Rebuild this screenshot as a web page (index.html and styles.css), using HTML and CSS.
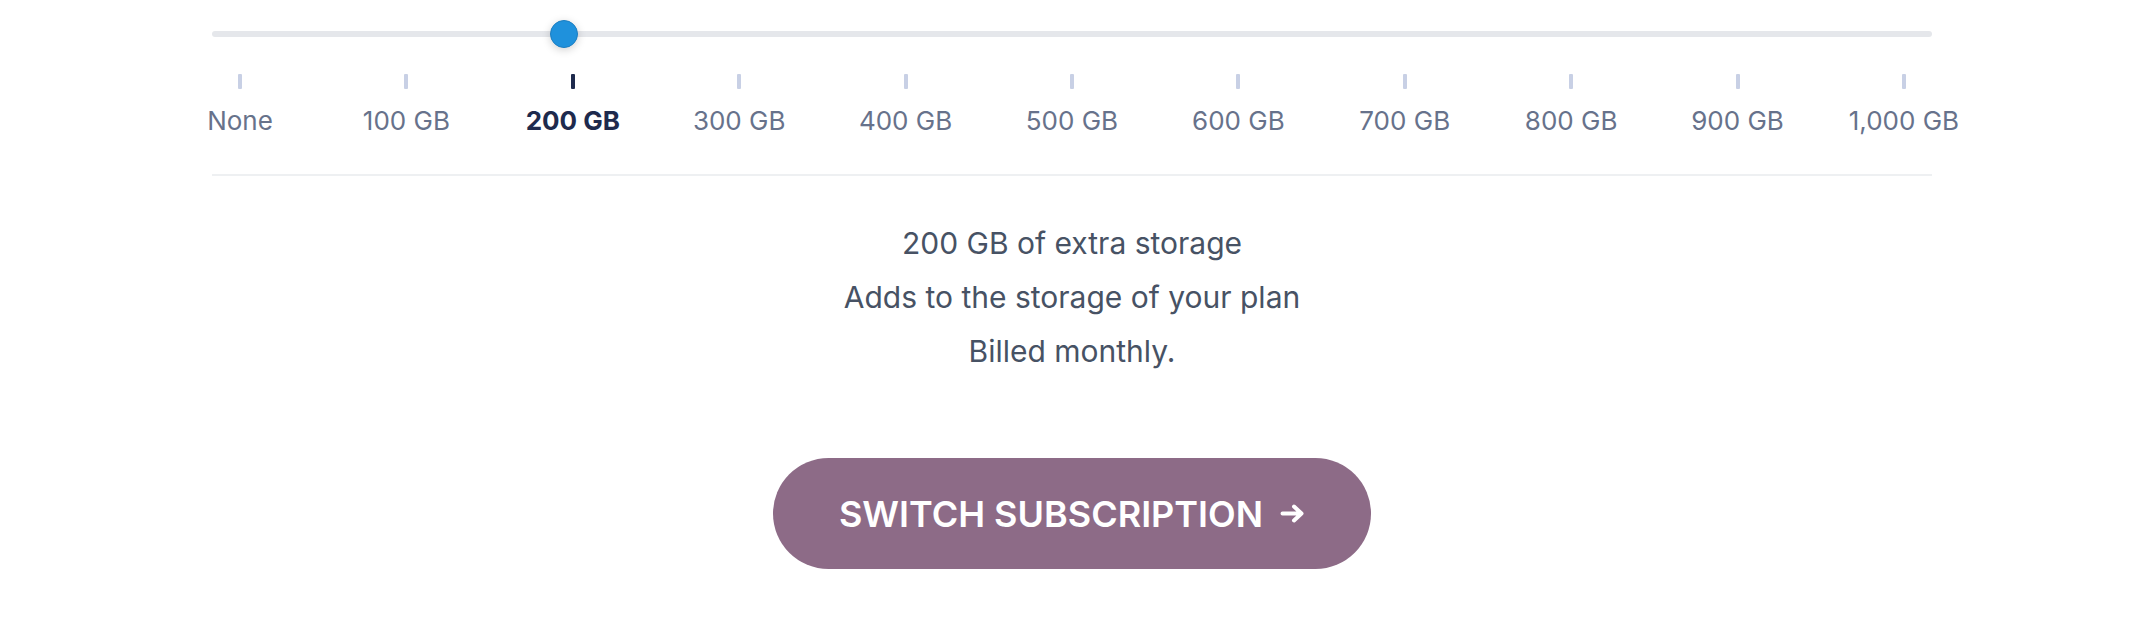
FILE: index.html
```html
<!DOCTYPE html>
<html lang="en">
<head>
    <meta charset="UTF-8">
    <meta name="viewport" content="width=device-width, initial-scale=1.0">
    <title>Extra Storage</title>
    <link rel="stylesheet" href="styles.css">
</head>
<body>
    <div id="storage">
        <input type="range" class="storage-range" min="0" max="10" step="1" value="2">

        <div class="steps">
            <div class="step"><span class="tick"></span><span class="label">None</span></div>
            <div class="step"><span class="tick"></span><span class="label">100 GB</span></div>
            <div class="step active"><span class="tick"></span><span class="label">200 GB</span></div>
            <div class="step"><span class="tick"></span><span class="label">300 GB</span></div>
            <div class="step"><span class="tick"></span><span class="label">400 GB</span></div>
            <div class="step"><span class="tick"></span><span class="label">500 GB</span></div>
            <div class="step"><span class="tick"></span><span class="label">600 GB</span></div>
            <div class="step"><span class="tick"></span><span class="label">700 GB</span></div>
            <div class="step"><span class="tick"></span><span class="label">800 GB</span></div>
            <div class="step"><span class="tick"></span><span class="label">900 GB</span></div>
            <div class="step"><span class="tick"></span><span class="label">1,000 GB</span></div>
        </div>

        <div class="summary">
            <p>200 GB of extra storage</p>
            <p>Adds to the storage of your plan</p>
            <p>Billed monthly.</p>
        </div>

        <div class="actions">
            <button class="switch-btn">
                Switch subscription
                <svg class="arrow" width="25" height="19" viewBox="0 0 25 19">
                    <path d="M2.5 9.5 H21.5 M14 2.5 L21.5 9.5 L14 16.5" fill="none" stroke="#fff" stroke-width="4" stroke-linecap="round" stroke-linejoin="round"/>
                </svg>
            </button>
        </div>
    </div>
</body>
</html>
```

FILE: styles.css
```css
body {
    font-family: Inter, 'Noto Sans', sans-serif;
    margin: 0;
    padding: 20px 0 0;
    background: #fff;
}

#storage {
    width: 1720px;
    margin: 0 auto;
}

/* slider */
.storage-range {
    -webkit-appearance: none;
    appearance: none;
    display: block;
    width: 100%;
    height: 28px;
    margin: 0;
    background: transparent;
}

.storage-range::-webkit-slider-runnable-track {
    height: 6px;
    background: #e5e7eb;
    border-radius: 3px;
}

.storage-range::-webkit-slider-thumb {
    -webkit-appearance: none;
    width: 28px;
    height: 28px;
    margin-top: -11px;
    border-radius: 50%;
    background: #1f91dc;
    border: 1px solid #1b7ec2;
    box-sizing: border-box;
    box-shadow: 0 2px 8px rgba(0, 0, 0, 0.18);
}

/* tick marks + labels */
.steps {
    display: flex;
    justify-content: space-between;
    padding: 26px 28px 0;
    border-bottom: 2px solid #eef0f2;
    height: 128px;
    box-sizing: border-box;
}

.step {
    width: 0;
    display: flex;
    flex-direction: column;
    align-items: center;
    white-space: nowrap;
}

.tick {
    width: 4px;
    height: 15px;
    background: #c8d0e5;
    border-radius: 1px;
}

.label {
    margin-top: 16px;
    font-size: 26px;
    color: #67728b;
}

.step.active .tick {
    background: #1e2a4d;
}

.step.active .label {
    font-weight: 700;
    color: #1e2a4d;
}

/* summary text */
.summary {
    margin-top: 40px;
    text-align: center;
    font-size: 30px;
    line-height: 54px;
    color: #475264;
}

.summary p {
    margin: 0;
}

.actions {
    display: flex;
    justify-content: center;
    margin-top: 80px;
}

.switch-btn {
    display: flex;
    align-items: center;
    gap: 17px;
    height: 111px;
    padding: 0 66px;
    border: none;
    border-radius: 56px;
    background: #8d6b87;
    color: #fff;
    font-family: Inter, 'Noto Sans', sans-serif;
    font-size: 36px;
    font-weight: 600;
    text-transform: uppercase;
    cursor: pointer;
}

.switch-btn:hover {
    background: #7f5f79;
}
```
